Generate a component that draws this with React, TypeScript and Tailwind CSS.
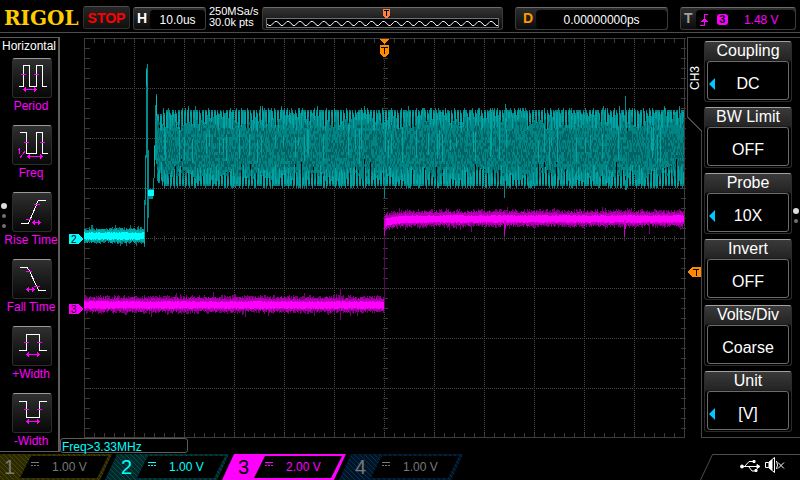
import React from "react";

/* ---------- trace generation ---------- */

function makeRandom(seed: number) {
  let s = seed;
  return () => {
    s = (s * 1664525 + 1013904223) % 4294967296;
    return s / 4294967296;
  };
}

function seg(x: number, from: number, to: number) {
  const a = Math.round(from);
  const b = Math.round(to);
  return b > a ? `M${x} ${a}h1v${b - a}h-1z` : "";
}

function buildBurst() {
  const rnd = makeRandom(7);
  let base = "";
  let dark = "";
  let bright = "";
  for (let x = 157; x < 684; x++) {
    const phase = x % 3;
    let top = 110 + (rnd() < 0.2 ? -2 : 0) + (rnd() < 0.1 ? -2 : 0) + (x < 162 ? 4 : 0);
    let bottom = 186 + (rnd() < 0.3 ? 2 : 0) + (x < 162 ? -5 : 0);
    const swellTop = Math.abs(Math.sin((x * Math.PI) / 73));
    const swellBottom = Math.abs(Math.cos((x * Math.PI) / 61));
    if (phase === 0 && rnd() < 0.75) top += 4 + rnd() * 20 * swellTop;
    if (phase === 1 && rnd() < 0.75) bottom -= 4 + rnd() * 24 * swellBottom;
    if (phase === 2 && rnd() < 0.3) top += 3;
    base += seg(x, top, bottom);
    if (phase !== 0) bright += seg(x, top + 2, top + 5 + rnd() * 16);
    if (phase !== 1) bright += seg(x, bottom - 5 - rnd() * 16, bottom - 2);
    if (rnd() < 0.1) bright += seg(x, 125 + rnd() * 15, 145 + rnd() * 20);
    for (let y = 122; y < 176; y += 3) {
      const weight = 0.55 - Math.abs(y - 149) / 80;
      if (rnd() < weight) dark += seg(x, y, y + 3);
    }
  }
  return { base, dark, bright };
}

function buildNoise(seed: number, x0: number, x1: number, top: number, bottom: number, spread: number, settle = false) {
  const rnd = makeRandom(seed);
  let faint = "";
  let mid = "";
  let core = "";
  for (let x = x0; x < x1; x++) {
    const shift = settle ? 4 * Math.exp(-(x - x0) / 9) : 0;
    const a = top + shift;
    const b = bottom + shift;
    const spike = rnd() < 0.06 ? 3 : 0;
    faint += seg(x, a - 1 - rnd() * spread - spike, b + 1 + rnd() * spread + (rnd() < 0.05 ? 3 : 0));
    mid += seg(x, a - rnd() * 3, b + rnd() * 3);
    core += seg(x, a + 1 + rnd(), b - rnd());
  }
  return { faint, mid, core };
}

const burst = buildBurst();
const ch2Idle = buildNoise(11, 84, 145, 231, 240, 3);
const ch3Low = buildNoise(23, 84, 384, 300, 309, 4);
const ch3High = buildNoise(31, 384, 684, 214, 223, 4, true);

const range = (n: number) => Array.from({ length: n }, (_, i) => i);

const gridTicks = [
  ...range(60).map((i) => `M${84 + i * 10} 38v5M${84 + i * 10} 433v5M${84 + i * 10} 236v5`),
  ...range(40).map((i) => `M84 ${38.5 + i * 10}h5M680 ${38.5 + i * 10}h5M382 ${38.5 + i * 10}h5`),
].join("");
const gridDots = [
  ...range(11).map((i) => `M${134.5 + i * 50} 38v400`),
  ...range(7).map((i) => `M84 ${88.5 + i * 50}h600`),
].join("");

function Noise({ data, colors }: { data: { faint: string; mid: string; core: string }; colors: [string, string, string] }) {
  return (
    <g>
      <path d={data.faint} fill={colors[0]} />
      <path d={data.mid} fill={colors[1]} />
      <path d={data.core} fill={colors[2]} />
    </g>
  );
}

function Scope() {
  const teal: [string, string, string] = ["#007a7a", "#00a8a8", "#00ffff"];
  const pink: [string, string, string] = ["#780078", "#b400b4", "#ff00ff"];
  return (
    <svg viewBox="60 33 627 405" preserveAspectRatio="none" className="block min-h-0 w-full flex-1" shapeRendering="crispEdges" role="img" aria-label="Waveform display">
      <path d={gridDots} stroke="#484848" strokeDasharray="1 1" fill="none" />
      <path d={gridTicks} stroke="#3a3a3a" fill="none" transform="translate(0.5 0)" />
      <rect x="84.5" y="38.5" width="600" height="399" stroke="#3c3c3c" fill="none" />

      <Noise data={ch2Idle} colors={teal} />
      <path
        fill="#008c8c"
        d="M144 200h1v47h-1zM145 155h1v50h-1zM146 68h1v90h-1zM147 64h1v168h-1zM148 150h1v68h-1zM153 178h1v16h-1zM154 145h1v33h-1zM155 105h1v55h-1zM156 94h1v70h-1zM157 115h1v55h-1zM149 189h4v10h-4z"
      />
      <path fill="#00b8b8" d="M144 232h1v12h-1zM146 70h1v16h-1zM156 96h1v20h-1zM154 146h1v20h-1z" />
      <path fill="#00ffff" d="M148 190h6v6h-6z" />
      <path d={burst.base} fill="#008484" />
      <path d={burst.dark} fill="#006262" />
      <path d={burst.bright} fill="#00a4a4" />
      <path fill="#008c8c" d="M384 180h1v18h-1zM504 180h1v18h-1zM505 104h1v14h-1zM625 96h1v20h-1zM625 180h2v10h-2z" />

      <Noise data={ch3Low} colors={pink} />
      <Noise data={ch3High} colors={pink} />
      <path fill="#600060" d="M384 222h1v86h-1z" />
      <path fill="#c800c8" d="M384 220h1v16h-1zM385 220h1v8h-1zM504 220h1v16h-1zM505 220h1v8h-1zM624 220h1v17h-1zM625 220h1v9h-1z" />
      <path fill="#780078" d="M340 288h1v12h-1zM340 308h1v12h-1zM649 222h1v12h-1zM471 222h1v10h-1z" />

      <path d="M69 234h9l5 5-5 5h-9z" fill="#00ffff" />
      <path d="M69 304h9l5 5-5 5h-9z" fill="#ff00ff" />
      <g className="font-['Liberation_Sans',sans-serif] text-[10px]" fill="#000">
        <text x="71" y="243">2</text>
        <text x="71" y="313">3</text>
      </g>
      <path d="M380 39h9l-4 5h-1zM380 45h9v8l-3 4h-3l-3-4z" fill="#ff8a00" />
      <path d="M381 47h7M384.5 47v7" stroke="#000" fill="none" />
    </svg>
  );
}

/* ---------- measurement sidebar ---------- */

const arrow = (x0: number, x1: number, y: number) =>
  `M${x0} ${y}.5H${x1 + 1}M${x0 + 1.5} ${y - 1}v3M${x0 + 2.5} ${y - 2}v5M${x1 - 0.5} ${y - 1}v3M${x1 - 1.5} ${y - 2}v5`;

const measures = [
  { name: "Period", wave: "M7 28.5H11.5V7.5H17.5V28.5H24.5V7.5H30.5V28.5H35", marks: "M9 16.5h5M22 16.5h5" + arrow(11, 24, 31) },
  { name: "Freq", wave: "M8 7.5H14.5V28.5H24.5V7.5H30.5V28.5H36", marks: "M12 17.5h5M28 17.5h5M6 24.5h2M7.5 23v6M8 33L13 26" + arrow(15, 30, 31) },
  { name: "Rise Time", wave: "M9 31.5H16L18 28L26 9L28 8.5H34", marks: "M22 12.5h6M14 27.5h6" + arrow(20, 28, 30) },
  { name: "Fall Time", wave: "M8 8.5H15L17 11L25 28L27 31.5H34", marks: "M14 12.5h6M22 27.5h6" + arrow(14, 22, 30) },
  { name: "+Width", wave: "M7 24.5H14.5V8.5H27.5V24.5H35", marks: "M12 16.5h5M25 16.5h5" + arrow(14, 27, 28) },
  { name: "-Width", wave: "M7 8.5H14.5V24.5H27.5V8.5H35", marks: "M12 16.5h5M25 16.5h5" + arrow(14, 27, 28) },
];

function Sidebar() {
  return (
    <aside className="relative mt-1 mb-0.5 w-[60px] shrink-0 border-t border-r-2 border-b border-[#5c5c5c]">
      <h2 className="h-5 text-center text-xs leading-4 text-white">Horizontal</h2>
      <div className="flex flex-col gap-2.5">
        {measures.map((m) => (
          <button key={m.name} type="button" className="flex h-[57px] w-full flex-col items-center pl-1 text-xs leading-4 whitespace-nowrap text-[#ff00ff]">
            <span className="ml-0.5 block size-10 shrink-0 rounded-[3px] border border-[#2c2c2c] border-t-[#9a9a9a] bg-linear-to-b from-[#303030] to-[#080808]">
              <svg viewBox="1 1 38 38" className="block size-[38px]" fill="none" shapeRendering="crispEdges">
                <path d={m.wave} stroke="#fff" />
                <path d={m.marks} stroke="#ff00ff" />
              </svg>
            </span>
            {m.name}
          </button>
        ))}
      </div>
      <span className="absolute top-[165px] left-px size-1.5 rounded-full bg-[#dcdcdc]" />
      <span className="absolute top-[176px] left-0.5 size-1 rounded-full bg-[#707070]" />
      <span className="absolute top-[186px] left-0.5 size-1 rounded-full bg-[#707070]" />
    </aside>
  );
}

/* ---------- channel menu ---------- */

const menu = [
  { title: "Coupling", value: "DC", more: true },
  { title: "BW Limit", value: "OFF", more: false },
  { title: "Probe", value: "10X", more: true },
  { title: "Invert", value: "OFF", more: false },
  { title: "Volts/Div", value: "Coarse", more: false },
  { title: "Unit", value: "[V]", more: true },
];

function ChannelMenu() {
  return (
    <aside className="relative flex w-[113px] shrink-0 pt-2 pl-[17px]">
      <svg viewBox="0 0 113 421" className="absolute inset-0 h-[421px] w-[113px]" fill="none" shapeRendering="crispEdges">
        <path d="M113 4.5H0.5V84L14.5 98V404.5H113" stroke="#484848" />
        <path d="M0 239l5-5h9v10H5z" fill="#ff8a00" />
        <path d="M6 236.5h6M9.5 236v7" stroke="#000" />
      </svg>
      <h2 className="absolute top-[33px] left-0 w-4 rotate-180 text-xs leading-4 text-white [writing-mode:vertical-rl]">CH3</h2>
      <div className="relative flex w-[88px] flex-col gap-[5px]">
        {menu.map((m) => (
          <button
            key={m.title}
            type="button"
            className="flex h-[61px] flex-col rounded-[3px] border border-[#2c2c2c] border-t-[#a0a0a0] bg-linear-to-b from-[#3a3a3a] via-[#242424] via-30% to-black to-40% px-0.5 text-center text-base text-white"
          >
            <span className="block h-[19px] w-full leading-[18px]">{m.title}</span>
            <span className="relative block h-[39px] w-full rounded-[3px] border border-[#6c6c6c] bg-black pt-1 leading-9">
              {m.more && (
                <svg viewBox="0 0 6 12" className="absolute top-4 left-px h-3 w-1.5">
                  <path d="M6 0v12L0 6z" fill="#00c8ff" />
                </svg>
              )}
              {m.value}
            </span>
          </button>
        ))}
      </div>
      <span className="absolute top-[175px] right-px size-1.5 rounded-full bg-[#dcdcdc]" />
      <span className="absolute top-[186px] right-0.5 size-1 rounded-full bg-[#707070]" />
    </aside>
  );
}

/* ---------- header ---------- */

function HeaderBox({ label, tone, className, children }: { label: string; tone: string; className: string; children: React.ReactNode }) {
  return (
    <div className={`flex h-[23px] shrink-0 rounded-[3px] border border-[#3a3a3a] border-t-[#6c6c6c] bg-linear-to-b from-[#2e2e2e] to-[#0c0c0c] ${className}`}>
      <span className={`px-[3px] text-sm leading-5 font-bold ${tone}`}>{label}</span>
      <span className="mt-0.5 flex flex-1 items-center justify-center rounded-sm bg-black text-xs">{children}</span>
    </div>
  );
}

const memoryWave =
  "M0 5" +
  range(20)
    .map((i) => `L${i * 12 + 2} 6.5H${i * 12 + 4}L${i * 12 + 7} 3.5L${i * 12 + 8} 2.5H${i * 12 + 10}L${i * 12 + 13} 5`)
    .join("");

function Header() {
  return (
    <header className="flex h-[33px] shrink-0 items-start border-b border-[#4a4e4e] pt-1.5 pr-1 text-white">
      <h1 className="w-[83px] shrink-0 pl-1 font-['DejaVu_Serif',serif] text-xl leading-6 font-bold text-[#ffcc00]">RIGOL</h1>
      <button type="button" className="h-[23px] w-[47px] shrink-0 rounded-[3px] border border-[#2e2e2e] border-t-[#4c4c4c] bg-linear-to-b from-[#262626] to-[#101010] text-center text-sm leading-5 font-bold text-[#ff0000]">
        STOP
      </button>
      <HeaderBox label="H" tone="text-white" className="mt-px ml-[3px] w-[73px]">
        10.0us
      </HeaderBox>
      <p className="ml-[3px] w-[53px] shrink-0 text-[11px] leading-[11px] whitespace-nowrap">
        250MSa/s
        <br />
        30.0k pts
      </p>
      <div className="relative mt-px flex h-[23px] flex-1 flex-col justify-end rounded-[3px] border border-[#3a3a3a] border-t-[#6c6c6c] bg-linear-to-b from-[#333] to-[#0c0c0c] px-[3px]">
        <svg viewBox="0 0 232 8" preserveAspectRatio="none" className="mb-px block h-[10px] w-full border border-[#6a7478] bg-black" fill="none">
          <path d={memoryWave} stroke="#fff" />
        </svg>
        <svg viewBox="0 0 7 9" className="absolute top-px left-1/2 h-[9px] w-[7px]" shapeRendering="crispEdges">
          <path d="M0 0h7v7L4 9H3L0 7z" fill="#ff8040" />
          <path d="M1 1.5h5M3.5 1v6" stroke="#000" />
        </svg>
      </div>
      <HeaderBox label="D" tone="text-[#ff9a00]" className="mt-px ml-3 w-[153px] pl-1">
        0.00000000ps
      </HeaderBox>
      <HeaderBox label="T" tone="text-[#a0a0a0]" className="mt-px ml-3 w-[116px]">
        <span className="flex items-center pr-3 text-[#ff00ff]">
          <svg viewBox="0 0 9 12" className="h-3 w-[9px]" fill="none" shapeRendering="crispEdges">
            <path d="M0 11.5H4.5V0.5H8M1 7.5h7M2 6.5h5M3 5.5h3" stroke="#ff00ff" />
          </svg>
          <span className="ml-2 h-[11px] w-[11px] rounded-[3px] bg-[#ff00ff] text-center text-[11px] leading-[11px] font-bold text-black">3</span>
          <span className="ml-4">1.48 V</span>
        </span>
      </HeaderBox>
    </header>
  );
}

/* ---------- channel bar ---------- */

const channels = [
  { n: 1, scale: "1.00 V", fill: "#2c2a00", hatch: "#4a4606", tone: "text-[#787878]" },
  { n: 2, scale: "1.00 V", fill: "#002a2a", hatch: "#0a4c4c", tone: "text-[#00ffff]" },
  { n: 3, scale: "2.00 V", fill: "#ff00ff", hatch: "#ff00ff", tone: "text-[#ff00ff]" },
  { n: 4, scale: "1.00 V", fill: "#001428", hatch: "#0a3050", tone: "text-[#787878]" },
];

function Footer() {
  return (
    <footer className="flex h-[26px] shrink-0 overflow-hidden">
      <nav className="-ml-3 flex flex-1">
        {channels.map((c) => (
          <button key={c.n} type="button" className={`relative mr-[-7px] h-[26px] w-[124px] shrink-0 ${c.tone}`}>
            <svg viewBox="0 0 124 26" className="absolute inset-0 h-[26px] w-[124px]">
              <defs>
                <pattern id={`hatch${c.n}`} width="5" height="5" patternUnits="userSpaceOnUse">
                  <rect width="5" height="5" fill={c.fill} />
                  <path d="M-1 -1l7 7M-1 4l2 2M4 -1l2 2" stroke={c.hatch} />
                </pattern>
              </defs>
              <path d="M12 0H124L112 26H0z" fill={`url(#hatch${c.n})`} />
              <path d="M43 2H120L109 24H32z" fill="#000" />
              <path d="M43 8.500h8M43 11.500h2m1 0h2m1 0h2" stroke="currentColor" shapeRendering="crispEdges" />
            </svg>
            <span className="relative flex items-center pl-4 leading-[26px]">
              <span className={c.n === 3 ? "w-12 text-left text-xl leading-[26px] text-black" : "w-12 text-left text-xl leading-[26px]"}>{c.n}</span>
              <span className="text-xs leading-[26px]">{c.scale}</span>
            </span>
          </button>
        ))}
      </nav>
      <svg viewBox="0 0 100 26" className="h-[26px] w-[100px] shrink-0" fill="none">
        <path d="M0.5 26L12.5 0.5H100" stroke="#4c4c4c" />
        <g stroke="#fff">
          <path d="M42 12.500H58M45 12l4-4.500h4M49 13l3 4h4" />
          <circle cx="42" cy="12.500" r="1.500" fill="#fff" />
          <path d="M57 10.500v4l3-2z" fill="#fff" />
          <path d="M53 6.500h2v2h-2zM55 15.500h2v2h-2z" fill="#fff" />
          <path d="M65.500 8.500h3l6-5v15l-6-5h-3z" />
          <path d="M69 8.500v5l3 2.500V6z" fill="#fff" />
          <path d="M76.500 7q2 4 0 8M78 8.500l6 6M84 8.500l-6 6" />
        </g>
      </svg>
    </footer>
  );
}

export default function App() {
  return (
    <div className="flex min-h-screen flex-col overflow-hidden bg-black font-['Liberation_Sans',Arial,sans-serif]">
      <Header />
      <main className="flex flex-1">
        <Sidebar />
        <section className="flex min-w-0 flex-1 flex-col">
          <Scope />
          <output className="mb-px block h-[15px] w-32 rounded-[3px] border border-[#5c5c5c] bg-black pl-px text-xs leading-4 text-[#00ffff]">Freq&gt;3.33MHz</output>
        </section>
        <ChannelMenu />
      </main>
      <Footer />
    </div>
  );
}
